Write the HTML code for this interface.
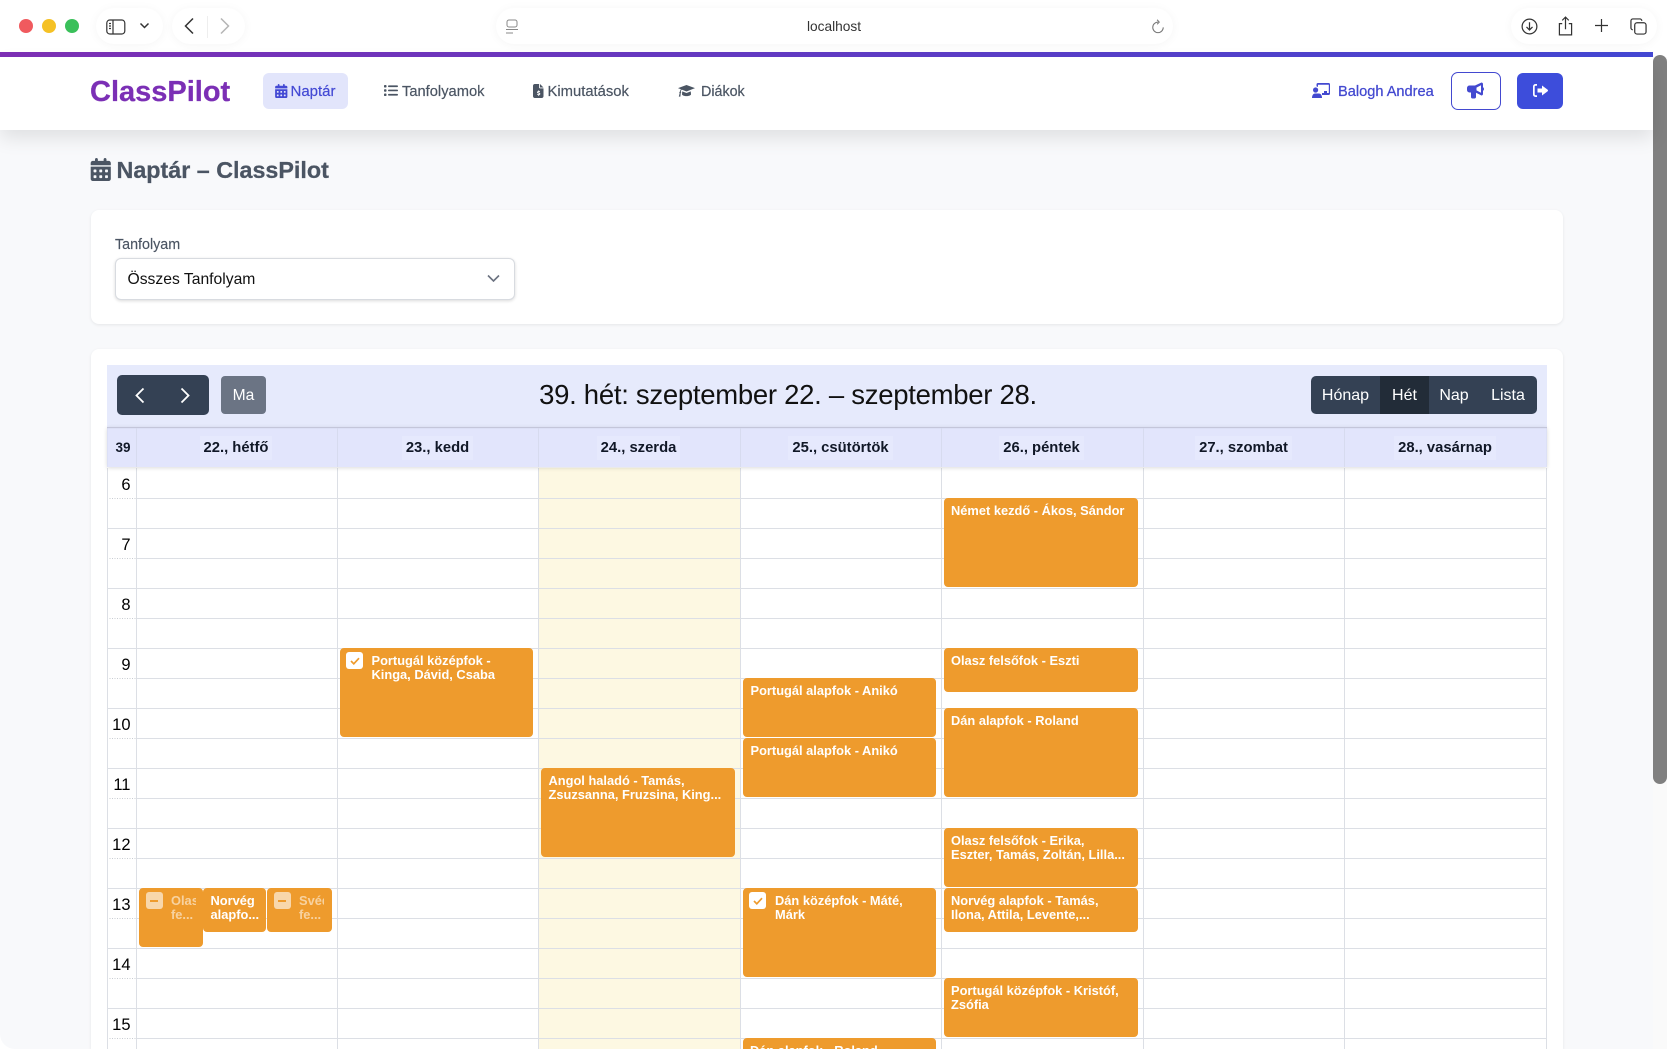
<!DOCTYPE html>
<html lang="hu"><head><meta charset="utf-8"><title>Naptár – ClassPilot</title>
<style>
html,body{margin:0;padding:0;width:1667px;height:1049px;overflow:hidden;background:#fff}
body{position:relative;font-family:"Liberation Sans",sans-serif;color:#000}
div,span,svg{position:absolute;display:block}
b{font-weight:700}
.t{white-space:nowrap}
.pill{background:#fff;border-radius:18px;box-shadow:0 1px 10px rgba(0,0,0,.045);top:8px;height:36px}
.ev{background:#ee9b2d;border-radius:4px;color:#fff;font-weight:700;font-size:12.85px;line-height:14.3px;padding:5.5px 0 0 7.5px;box-sizing:border-box;white-space:nowrap;overflow:hidden}
.ck{width:17px;height:17px;background:#fff;border-radius:3px;left:6.7px;top:4px}
.ev .in{position:absolute;left:32px;top:5.5px}
.hl{left:107px;width:1440px;height:1px;background:#dcdfe5}
.vl{top:468px;width:1px;height:581px;background:#dcdfe5}
.h{left:107px;width:23.5px;text-align:right;font-size:16.5px;line-height:20px}
.d{top:428px;height:40px;line-height:40px;font-size:14.8px;font-weight:700;text-align:center;color:#111827}
.d span{position:static;display:inline-block;line-height:24px;background:#e6e9fd;padding:0 4px;vertical-align:middle}
.nav{top:82px;height:20px;line-height:20px;font-size:14.7px;color:#4b5563;white-space:nowrap;-webkit-text-stroke:.2px currentColor}
.vb{top:377px;height:38px;line-height:38px;color:#fff;font-size:16px;text-align:center}
</style></head><body>

<!-- browser chrome -->
<div style="left:19px;top:19px;width:14px;height:14px;border-radius:50%;background:#f05a5e"></div>
<div style="left:42px;top:19px;width:14px;height:14px;border-radius:50%;background:#f5c125"></div>
<div style="left:65px;top:19px;width:14px;height:14px;border-radius:50%;background:#3ac05a"></div>
<div class="pill" style="left:96px;width:67px"></div>
<div class="pill" style="left:172px;width:73px"></div>
<div class="pill" style="left:496px;width:677px"></div>
<div class="pill" style="left:1511px;width:146px"></div>
<svg style="left:106px;top:19px" width="20" height="16" viewBox="0 0 20 16" fill="none" stroke="#333" stroke-width="1.2"><rect x=".8" y="1" width="18" height="14" rx="3"/><path d="M7 1v14M3 4.5h2M3 7h2M3 9.5h2"/></svg>
<svg style="left:139px;top:22px" width="11" height="8" viewBox="0 0 11 8" fill="none" stroke="#333" stroke-width="1.5"><path d="M1.5 1.5 5.5 5.5 9.5 1.5"/></svg>
<svg style="left:183px;top:17px" width="12" height="18" viewBox="0 0 12 18" fill="none" stroke="#333" stroke-width="1.5"><path d="M10 1.5 2.5 9 10 16.5"/></svg>
<div style="left:207px;top:16px;width:1px;height:22px;background:#eee"></div>
<svg style="left:219px;top:17px" width="12" height="18" viewBox="0 0 12 18" fill="none" stroke="#b5b5b5" stroke-width="1.5"><path d="M2 1.5 9.5 9 2 16.5"/></svg>
<svg style="left:505px;top:19px" width="14" height="16" viewBox="0 0 14 16" fill="none" stroke="#888" stroke-width="1"><rect x="2" y="1" width="10" height="7" rx="2"/><path d="M1 10.5h12M1 14h7"/></svg>
<div class="t" style="left:734px;width:200px;text-align:center;top:17px;line-height:20px;font-size:13.7px;color:#333">localhost</div>
<svg style="left:1151px;top:19px" width="14" height="15" viewBox="0 0 16 17" fill="none" stroke="#777" stroke-width="1.2"><path d="M8 3.5a6 6 0 1 0 6 6M7 .8l2.400 2.700L7 6"/></svg>
<svg style="left:1521px;top:18px" width="17" height="17" viewBox="0 0 18 18" fill="none" stroke="#333" stroke-width="1.3"><circle cx="9" cy="9" r="7.8"/><path d="M9 4.500v8M5.800 9.500 9 12.700l3.200-3.200"/></svg>
<svg style="left:1558px;top:16px" width="15" height="20" viewBox="0 0 16 21" fill="none" stroke="#333" stroke-width="1.3"><path d="M4.500 8H1.500v12h13V8h-3M8 14V1.500M4.500 4.500 8 1l3.500 3.500"/></svg>
<svg style="left:1595px;top:19px" width="13" height="13" viewBox="0 0 14 14" fill="none" stroke="#333" stroke-width="1.3"><path d="M7 0v14M0 7h14"/></svg>
<svg style="left:1630px;top:18px" width="17" height="17" viewBox="0 0 18 18" fill="none" stroke="#333" stroke-width="1.3"><rect x="5" y="5" width="12" height="12" rx="2.500"/><path d="M3 12.500A2 2 0 0 1 1 10.500V3a2 2 0 0 1 2-2h7.500a2 2 0 0 1 2 2"/></svg>

<!-- page -->
<div style="left:0;top:57px;width:1653px;height:992px;background:#f8f9fb;border-bottom-left-radius:15px;overflow:hidden"></div>
<div style="left:0;top:52px;width:1653px;height:5px;background:linear-gradient(90deg,#7d2fb4,#4347d2);z-index:3"></div>
<div style="left:1653px;top:57px;width:14px;height:992px;background:#fafafa"></div>
<div style="left:1653px;top:55px;width:14px;height:729px;background:#808080;border-radius:7px"></div>

<!-- nav -->
<div style="left:0;top:57px;width:1653px;height:73px;background:#fff;box-shadow:0 8px 18px rgba(0,0,0,.1)"></div>
<div class="t" style="left:90px;top:73px;line-height:38px;font-size:29px;font-weight:700;color:#7b2fb5;-webkit-text-stroke:.25px #7b2fb5">ClassPilot</div>
<div style="left:263px;top:73px;width:85px;height:36px;background:#e2e5fb;border-radius:6px"></div>
<svg style="left:275px;top:84px;fill:#4349d4" width="12.500" height="14" viewBox="0 0 448 512"><path id="cal" d="M128 0c17.700 0 32 14.300 32 32V64H288V32c0-17.700 14.300-32 32-32s32 14.300 32 32V64h48c26.500 0 48 21.500 48 48v48H0V112C0 85.500 21.500 64 48 64H96V32c0-17.700 14.300-32 32-32zM0 192H448V464c0 26.500-21.500 48-48 48H48c-26.500 0-48-21.500-48-48V192zm64 80v32c0 8.800 7.200 16 16 16h32c8.800 0 16-7.200 16-16V272c0-8.800-7.200-16-16-16H80c-8.800 0-16 7.200-16 16zm128 0v32c0 8.800 7.200 16 16 16h32c8.800 0 16-7.200 16-16V272c0-8.800-7.200-16-16-16H208c-8.800 0-16 7.200-16 16zm144-16c-8.800 0-16 7.200-16 16v32c0 8.800 7.200 16 16 16h32c8.800 0 16-7.200 16-16V272c0-8.800-7.200-16-16-16H336zM64 400v32c0 8.800 7.200 16 16 16h32c8.800 0 16-7.200 16-16V400c0-8.800-7.200-16-16-16H80c-8.800 0-16 7.200-16 16zm144-16c-8.800 0-16 7.200-16 16v32c0 8.800 7.200 16 16 16h32c8.800 0 16-7.200 16-16V400c0-8.800-7.200-16-16-16H208zm112 16v32c0 8.800 7.200 16 16 16h32c8.800 0 16-7.200 16-16V400c0-8.800-7.200-16-16-16H336c-8.800 0-16 7.200-16 16z"/></svg>
<div class="nav" style="left:290.500px;color:#4349d4;font-size:15px">Naptár</div>
<svg style="left:384px;top:84px;fill:#4b5563" width="14" height="13" viewBox="0 0 14 13"><rect x="0" y="1" width="2.500" height="2.500" rx=".8"/><rect x="0" y="5.200" width="2.500" height="2.500" rx=".8"/><rect x="0" y="9.500" width="2.500" height="2.500" rx=".8"/><rect x="4" y="1.400" width="10" height="1.700" rx=".8"/><rect x="4" y="5.600" width="10" height="1.700" rx=".8"/><rect x="4" y="9.900" width="10" height="1.700" rx=".8"/></svg>
<div class="nav" style="left:402px">Tanfolyamok</div>
<svg style="left:533px;top:84px;fill:#4b5563" width="10.500" height="14" viewBox="0 0 384 512"><path d="M64 0C29 0 0 29 0 64V448c0 35 29 64 64 64H320c35 0 64-29 64-64V160H256c-18 0-32-14-32-32V0zM256 0V128H384z"/><path d="M192 232v28c-26 4-44 22-44 44 0 48 76 34 76 58 0 14-44 12-68-2v36c12 6 24 8 36 10v26h32v-28c26-4 44-22 44-46 0-48-76-36-76-56 0-14 36-14 62-2v-36c-10-4-20-6-30-8v-24z" fill="#fff"/></svg>
<div class="nav" style="left:547.500px;font-size:14.800px">Kimutatások</div>
<svg style="left:677.500px;top:83.500px;fill:#4b5563" width="17" height="14" viewBox="0 0 640 512"><path d="M320 32 0 150l110 42c-22 28-36 60-42 94-10 6-18 18-18 30 0 10 4 20 12 26L30 470h60l14-140c10-6 16-16 16-28 0-12-6-22-16-28 6-26 18-50 36-70l180 70 320-124z"/><path d="M160 270 150 380c0 40 80 70 170 70s170-30 170-70l-10-110-160 60z"/></svg>
<div class="nav" style="left:701px;font-size:14.300px">Diákok</div>

<svg style="left:1312px;top:83px;fill:#4349d0" width="18" height="15" viewBox="0 0 18 15"><path d="M4.500 1.500A1.500 1.500 0 0 1 6 0h10.500A1.500 1.500 0 0 1 18 1.500v9a1.500 1.500 0 0 1-1.500 1.500h-6.500v-2h2V8h3v2h1.800V1.700H6v2.300a4 4 0 0 0-1.500-.6z"/><circle cx="3.600" cy="7" r="2.600"/><path d="M0 15c0-3 1.500-4.500 3-4.500h4c1.500 0 3 1.500 3 4.500z"/></svg>
<div class="t" style="left:1338px;top:82px;line-height:20px;font-size:14.600px;color:#4349d0;-webkit-text-stroke:.25px #4349d0">Balogh Andrea</div>
<div style="left:1451px;top:72px;width:48px;height:36px;border:1px solid #4349d0;border-radius:7px;background:#fff"></div>
<svg style="left:1467px;top:82px;fill:#4349d0" width="17" height="17" viewBox="0 0 17 17"><path d="M14.500 0.500c.8 0 1.500.7 1.500 1.500v3.200c.6.300 1 1 1 1.800s-.4 1.500-1 1.800V12c0 .8-.7 1.500-1.500 1.500L9 10.800V15c0 1-.8 1.500-1.500 1.500h-2C4.700 16.500 4 16 4 15v-4.500H2.500A2.500 2.500 0 0 1 0 8V6a2.500 2.500 0 0 1 2.500-2.500H8zM14 3.300 9.500 5.600v2.800l4.500 2.300z" fill-rule="evenodd"/></svg>
<div style="left:1517px;top:73px;width:46px;height:36px;border-radius:6px;background:#3d4ddb"></div>
<svg style="left:1533px;top:84px;fill:#fff" width="15" height="13" viewBox="0 0 15 13"><path d="M4 0v1.800H2.500c-.5 0-.8.400-.8.800v7.800c0 .4.300.8.800.8H4V13H2.500A2.500 2.500 0 0 1 0 10.500v-8A2.500 2.500 0 0 1 2.500 0zM9 1.500l5.700 4.300c.4.400.4 1 0 1.400L9 11.500V8.500H4.500v-4H9z"/></svg>

<!-- heading -->
<svg style="left:90px;top:158px;fill:#4b5563" width="21.500" height="23" viewBox="0 0 448 512"><use href="#cal"/></svg>
<div class="t" style="left:116.500px;top:155px;line-height:30px;font-size:23.300px;font-weight:700;color:#4b5563;-webkit-text-stroke:.25px #4b5563">Naptár – ClassPilot</div>

<!-- filter card -->
<div style="left:91px;top:210px;width:1472px;height:114px;background:#fff;border-radius:8px;box-shadow:0 1px 3px rgba(0,0,0,.08)"></div>
<div class="t" style="left:115px;top:235px;line-height:20px;font-size:14.300px;color:#4b5563;-webkit-text-stroke:.15px #4b5563">Tanfolyam</div>
<div style="left:115px;top:258px;width:398px;height:40px;background:#fff;border:1px solid #d8dbe0;border-radius:6px;box-shadow:0 1px 3px rgba(0,0,0,.15)"></div>
<div class="t" style="left:127.500px;top:270px;line-height:20px;font-size:15.700px;color:#111">Összes Tanfolyam</div>
<svg style="left:487px;top:274px" width="13" height="9" viewBox="0 0 13 9" fill="none" stroke="#6b7280" stroke-width="1.600"><path d="M1 1.500 6.500 7 12 1.500"/></svg>

<!-- calendar card -->
<div style="left:91px;top:349px;width:1472px;height:700px;background:#fff;border-radius:8px 8px 0 0;box-shadow:0 1px 3px rgba(0,0,0,.08)"></div>
<div style="left:107px;top:365px;width:1440px;height:62px;background:#e6eafc"></div>
<div style="left:117px;top:375px;width:92px;height:40px;background:#344154;border-radius:5px"></div>
<svg style="left:134px;top:387px" width="11" height="17" viewBox="0 0 11 17" fill="none" stroke="#fff" stroke-width="1.800"><path d="M9.500 1.500 2.500 8.500l7 7"/></svg>
<svg style="left:180px;top:387px" width="11" height="17" viewBox="0 0 11 17" fill="none" stroke="#fff" stroke-width="1.800"><path d="M1.500 1.500l7 7-7 7"/></svg>
<div style="left:221px;top:376px;width:45px;height:38px;background:#6b7484;border-radius:4px"></div>
<div class="t" style="left:221px;top:377px;width:45px;color:#fff;font-size:15.600px;line-height:38px;text-align:center">Ma</div>
<div class="t" style="left:488px;width:600px;text-align:center;top:376px;line-height:38px;font-size:27.500px;letter-spacing:-.28px;color:#111">39. hét: szeptember 22. – szeptember 28.</div>
<div style="left:1311px;top:376px;width:226px;height:38px;background:#344154;border-radius:5px"></div>
<div style="left:1380px;top:376px;width:49px;height:38px;background:#222c38"></div>
<div class="vb" style="left:1311px;width:69px">Hónap</div>
<div class="vb" style="left:1380px;width:49px">Hét</div>
<div class="vb" style="left:1427px;width:54px">Nap</div>
<div class="vb" style="left:1481px;width:54px">Lista</div>

<!-- today column -->
<div style="left:539px;top:468px;width:202px;height:581px;background:#fdf8e2"></div>

<!-- grid lines -->
<div class="hl" style="left:137px;width:1410px;top:498px"></div><div class="hl" style="top:528px"></div><div class="hl" style="left:137px;width:1410px;top:558px"></div><div class="hl" style="top:588px"></div><div class="hl" style="left:137px;width:1410px;top:618px"></div><div class="hl" style="top:648px"></div><div class="hl" style="left:137px;width:1410px;top:678px"></div><div class="hl" style="top:708px"></div><div class="hl" style="left:137px;width:1410px;top:738px"></div><div class="hl" style="top:768px"></div><div class="hl" style="left:137px;width:1410px;top:798px"></div><div class="hl" style="top:828px"></div><div class="hl" style="left:137px;width:1410px;top:858px"></div><div class="hl" style="top:888px"></div><div class="hl" style="left:137px;width:1410px;top:918px"></div><div class="hl" style="top:948px"></div><div class="hl" style="left:137px;width:1410px;top:978px"></div><div class="hl" style="top:1008px"></div><div class="hl" style="left:137px;width:1410px;top:1038px"></div>
<svg style="left:107px;top:468px" width="30" height="581"><g stroke="#c8ccd2" stroke-width="1" stroke-dasharray="1 1.500"><path d="M0 30.500h30M0 90.500h30M0 150.500h30M0 210.500h30M0 270.500h30M0 330.500h30M0 390.500h30M0 450.500h30M0 510.500h30M0 570.500h30"/></g></svg>
<div class="vl" style="left:107px"></div><div class="vl" style="left:136px"></div><div class="vl" style="left:337px"></div><div class="vl" style="left:538px"></div><div class="vl" style="left:740px"></div><div class="vl" style="left:941px"></div><div class="vl" style="left:1143px"></div><div class="vl" style="left:1344px"></div><div class="vl" style="left:1546px"></div>

<!-- header row -->
<div style="left:107px;top:427px;width:1440px;height:40px;background:#e2e5fc;box-shadow:0 1px 4px rgba(0,0,0,.14),inset 0 1px 1px rgba(0,0,0,.16)"></div>
<div style="left:136px;top:428px;width:1px;height:39px;background:#d7dbef"></div><div style="left:337px;top:428px;width:1px;height:39px;background:#d7dbef"></div><div style="left:538px;top:428px;width:1px;height:39px;background:#d7dbef"></div><div style="left:740px;top:428px;width:1px;height:39px;background:#d7dbef"></div><div style="left:941px;top:428px;width:1px;height:39px;background:#d7dbef"></div><div style="left:1143px;top:428px;width:1px;height:39px;background:#d7dbef"></div><div style="left:1344px;top:428px;width:1px;height:39px;background:#d7dbef"></div>
<div class="d" style="left:108px;width:30px;font-size:13.500px">39</div>
<div class="d" style="left:135.500px;width:201px"><span>22., hétfő</span></div>
<div class="d" style="left:337px;width:201px"><span>23., kedd</span></div>
<div class="d" style="left:537.500px;width:202px"><span>24., szerda</span></div>
<div class="d" style="left:740px;width:201px"><span>25., csütörtök</span></div>
<div class="d" style="left:940.500px;width:202px"><span>26., péntek</span></div>
<div class="d" style="left:1143px;width:201px"><span>27., szombat</span></div>
<div class="d" style="left:1344px;width:202px"><span>28., vasárnap</span></div>

<!-- hours -->
<div class="h" style="top:474.500px">6</div><div class="h" style="top:535px">7</div><div class="h" style="top:594.500px">8</div><div class="h" style="top:655px">9</div><div class="h" style="top:715px">10</div><div class="h" style="top:775px">11</div><div class="h" style="top:835px">12</div><div class="h" style="top:895px">13</div><div class="h" style="top:955px">14</div><div class="h" style="top:1015px">15</div>

<!-- events: Monday -->
<div class="ev" style="left:139px;top:888px;width:63.500px;height:59px"><div class="ck" style="opacity:.6"><div style="left:4.500px;top:7.500px;width:8px;height:2px;background:#ee9b2d"></div></div><div class="in" style="left:32px;width:25px;overflow:hidden;opacity:.55">Olas<br>fe...</div></div>
<div class="ev" style="left:203px;top:888px;width:63px;height:44px">Norvég<br>alapfo...</div>
<div class="ev" style="left:267px;top:888px;width:65px;height:44px"><div class="ck" style="opacity:.6"><div style="left:4.500px;top:7.500px;width:8px;height:2px;background:#ee9b2d"></div></div><div class="in" style="width:25px;overflow:hidden;opacity:.55">Svéd<br>fe...</div></div>

<!-- Tuesday -->
<div class="ev" style="left:339.500px;top:648px;width:193px;height:89px"><div class="ck"><svg style="left:3.500px;top:4.500px" width="10" height="8" viewBox="0 0 10 8" fill="none" stroke="#ee9b2d" stroke-width="1.700"><path d="M1 4l2.800 2.800L9 1.200"/></svg></div><div class="in">Portugál középfok -<br>Kinga, Dávid, Csaba</div></div>

<!-- Wednesday -->
<div class="ev" style="left:541px;top:768px;width:194px;height:89px">Angol haladó - Tamás,<br>Zsuzsanna, Fruzsina, King...</div>

<!-- Thursday -->
<div class="ev" style="left:743px;top:678px;width:193px;height:59px">Portugál alapfok - Anikó</div>
<div class="ev" style="left:743px;top:738px;width:193px;height:59px">Portugál alapfok - Anikó</div>
<div class="ev" style="left:743px;top:888px;width:193px;height:89px"><div class="ck" style="left:6.200px"><svg style="left:3.500px;top:4.500px" width="10" height="8" viewBox="0 0 10 8" fill="none" stroke="#ee9b2d" stroke-width="1.700"><path d="M1 4l2.800 2.800L9 1.200"/></svg></div><div class="in">Dán középfok - Máté,<br>Márk</div></div>
<div class="ev" style="left:743px;top:1038px;width:193px;height:40px;padding-left:7px">Dán alapfok - Roland</div>

<!-- Friday -->
<div class="ev" style="left:943.500px;top:498px;width:194px;height:89px">Német kezdő - Ákos, Sándor</div>
<div class="ev" style="left:943.500px;top:648px;width:194px;height:44px">Olasz felsőfok - Eszti</div>
<div class="ev" style="left:943.500px;top:708px;width:194px;height:89px">Dán alapfok - Roland</div>
<div class="ev" style="left:943.500px;top:828px;width:194px;height:59px">Olasz felsőfok - Erika,<br>Eszter, Tamás, Zoltán, Lilla...</div>
<div class="ev" style="left:943.500px;top:888px;width:194px;height:44px">Norvég alapfok - Tamás,<br>Ilona, Attila, Levente,...</div>
<div class="ev" style="left:943.500px;top:978px;width:194px;height:59px">Portugál középfok - Kristóf,<br>Zsófia</div>

</body></html>
